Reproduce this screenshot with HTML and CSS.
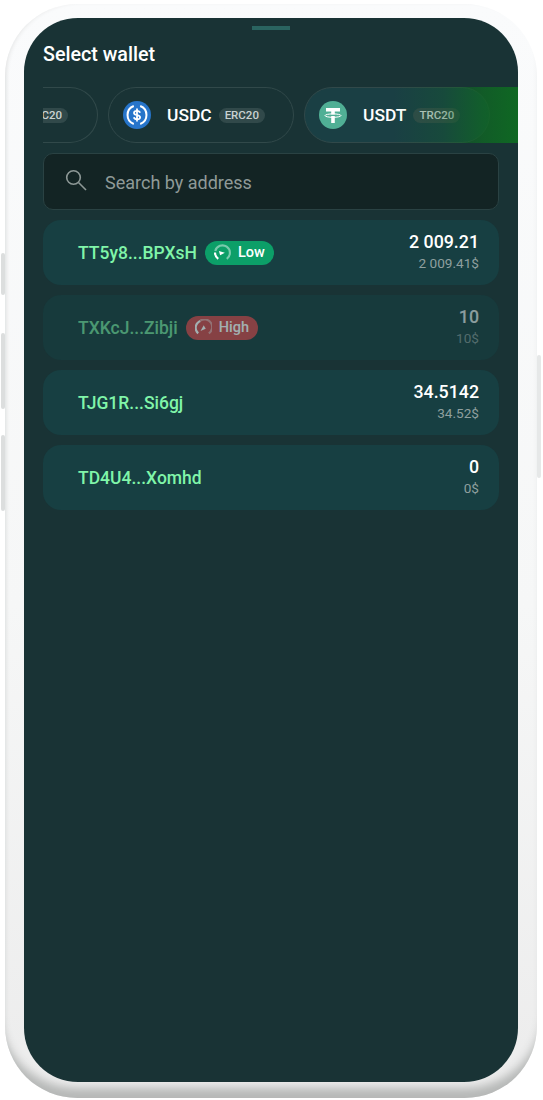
FILE: index.html

```html
<!DOCTYPE html>
<html lang="en">
<head>
    <meta charset="UTF-8">
    <title>Select wallet</title>
    <link rel="stylesheet" href="styles.css">
</head>
<body>
    <div class="phone">
        <span class="sidebtn btn-a"></span>
        <span class="sidebtn btn-b"></span>
        <span class="sidebtn btn-c"></span>
        <span class="sidebtn btn-d"></span>
        <div class="screen">
            <div class="handle"></div>
            <h1>Select wallet</h1>
            <div class="chips">
                <div class="chip chip-cut"><span class="tag">ERC20</span></div>
                <div class="chip">
                    <svg class="coin" viewBox="0 0 28 28">
                        <circle cx="14" cy="14" r="14" fill="#2775ca"/>
                        <path d="M10.8 5a9.6 9.6 0 0 0 0 18M17.2 5a9.6 9.6 0 0 1 0 18" fill="none" stroke="#fff" stroke-width="2"/>
                        <path d="M17 11.8c-.3-1.3-1.5-2-3-2-1.7 0-3 .8-3 2.1 0 3 6.1 1.4 6.1 4.3 0 1.3-1.4 2.1-3.1 2.1-1.6 0-2.8-.7-3.1-2M14 7.6v12.8" fill="none" stroke="#fff" stroke-width="1.8"/>
                    </svg>
                    <span class="coin-name">USDC</span>
                    <span class="tag">ERC20</span>
                </div>
                <div class="chip chip-on">
                    <svg class="coin" viewBox="0 0 28 28">
                        <circle cx="14" cy="14" r="14" fill="#50af95"/>
                        <path d="M7 7h14v3.4h-5.2v3.2h-3.6v-3.2H7zM12.2 15h3.6v7h-3.6z" fill="#fff"/>
                        <ellipse cx="14" cy="14.6" rx="8" ry="1.7" fill="none" stroke="#fff" stroke-width="1"/>
                    </svg>
                    <span class="coin-name">USDT</span>
                    <span class="tag">TRC20</span>
                </div>
                <div class="chips-fade"></div>
            </div>
            <div class="search">
                <svg class="search-icon" viewBox="0 0 22 22">
                    <circle cx="8.5" cy="8.5" r="6.8" fill="none" stroke="#8d9896" stroke-width="1.6"/>
                    <path d="M13.5 13.5l7.5 7.5" stroke="#8d9896" stroke-width="1.6"/>
                </svg>
                <span>Search by address</span>
            </div>
            <div class="wallets">
                <div class="wallet">
                    <div class="addr">TT5y8...BPXsH</div>
                    <div class="risk risk-low">
                        <svg class="gauge" viewBox="0 0 16 16">
                            <path d="M4 14A7 7 0 0 1 1 8" fill="none" stroke="#fff" stroke-width="2"/>
                            <path d="M1.2 6.5A7 7 0 1 1 12 14" fill="none" stroke="#fff" stroke-opacity=".45" stroke-width="2"/>
                            <path d="M4.6 6.6l5.6 1.6-4.4 2.4z" fill="#fff"/>
                        </svg>
                        Low
                    </div>
                    <div class="amount">
                        <div class="coins">2 009.21</div>
                        <div class="usd">2 009.41$</div>
                    </div>
                </div>
                <div class="wallet wallet-dim">
                    <div class="addr">TXKcJ...Zibji</div>
                    <div class="risk risk-high">
                        <svg class="gauge" viewBox="0 0 16 16">
                            <path d="M3 13.5A7 7 0 0 1 5 1.8" fill="none" stroke="#fff" stroke-width="2"/>
                            <path d="M5 1.6A7 7 0 0 1 13 13.5" fill="none" stroke="#fff" stroke-opacity=".45" stroke-width="2"/>
                            <path d="M5.2 11.4l3-5.6 1.9 3.3z" fill="#fff"/>
                        </svg>
                        High
                    </div>
                    <div class="amount">
                        <div class="coins">10</div>
                        <div class="usd">10$</div>
                    </div>
                </div>
                <div class="wallet">
                    <div class="addr">TJG1R...Si6gj</div>
                    <div class="amount">
                        <div class="coins">34.5142</div>
                        <div class="usd">34.52$</div>
                    </div>
                </div>
                <div class="wallet">
                    <div class="addr">TD4U4...Xomhd</div>
                    <div class="amount">
                        <div class="coins">0</div>
                        <div class="usd">0$</div>
                    </div>
                </div>
            </div>
        </div>
    </div>
</body>
</html>
```

FILE: styles.css

```css
body {
    margin: 0;
    background-color: #ffffff;
    font-family: Roboto, "Liberation Sans", sans-serif;
    overflow: hidden;
}
.phone {
    position: relative;
    width: 532px;
    height: 1094px;
    margin: 4px 0 0 5px;
    padding: 14px 19px 16px 19px;
    box-sizing: border-box;
    border-radius: 72px;
    background: linear-gradient(180deg, #fafbfc 0%, #f6f7f7 55%, #ececec 100%);
    box-shadow: inset 0 -16px 10px -6px #b6b8b7, inset 3px 0 4px -2px #e3e4e4;
}
.sidebtn {
    position: absolute;
    width: 4px;
    background-color: #dcdede;
    border-radius: 2px;
}
.btn-a { left: -4px; top: 249px; height: 42px; }
.btn-b { left: -4px; top: 329px; height: 76px; }
.btn-c { left: -4px; top: 431px; height: 76px; }
.btn-d { right: -4px; top: 351px; height: 123px; background-color: #e6e8e8; }
.screen {
    position: relative;
    height: 100%;
    padding: 0 19px;
    box-sizing: border-box;
    background-color: #193335;
    border-radius: 54px;
    overflow: hidden;
}
.handle {
    position: absolute;
    top: 8px;
    left: 228px;
    width: 38px;
    height: 4px;
    background-color: #2a6460;
}
h1 {
    margin: 0;
    padding-top: 26px;
    height: 43px;
    color: #ffffff;
    font-size: 19.7px;
    line-height: 22px;
    font-weight: 500;
}
.chips {
    position: relative;
    display: flex;
    gap: 10px;
    margin-right: -19px;
    height: 56px;
    overflow: hidden;
}
.chip {
    flex: none;
    display: flex;
    align-items: center;
    width: 186px;
    height: 56px;
    padding-left: 14px;
    box-sizing: border-box;
    border: 1px solid #31494a;
    border-radius: 28px;
}
.chip-cut {
    width: 55px;
    padding-left: 0;
    border-left: 0;
    border-radius: 0 28px 28px 0;
    overflow: hidden;
    justify-content: flex-end;
    padding-right: 29px;
}
.chip-cut .tag {
    margin-left: 0;
    flex: none;
}
.chip-on {
    background-color: #1a3f44;
}
.chips-fade {
    position: absolute;
    right: 0;
    top: 0;
    width: 125px;
    height: 56px;
    background: linear-gradient(90deg, rgba(15, 105, 35, 0) 0%, rgba(15, 105, 35, 0.25) 40%, rgba(15, 105, 35, 0.75) 72%, #0f6823 100%);
}
.coin {
    width: 28px;
    height: 28px;
    flex: none;
}
.coin-name {
    margin-left: 16px;
    color: #ffffff;
    font-size: 17.4px;
    font-weight: 500;
}
.tag {
    margin-left: 7px;
    padding: 0 6px;
    height: 15px;
    line-height: 15px;
    border-radius: 8px;
    background-color: #31494a;
    color: #c9d2d1;
    font-size: 11.5px;
    font-weight: 500;
}
.search {
    display: flex;
    align-items: center;
    height: 57px;
    margin-top: 10px;
    padding-left: 21px;
    box-sizing: border-box;
    background-color: #132424;
    border: 1px solid #2a4243;
    border-radius: 10px;
    color: #8f9a98;
    font-size: 18px;
}
.search span {
    margin-top: 2px;
}
.search-icon {
    width: 22px;
    height: 22px;
    margin-right: 18px;
    margin-top: -4px;
}
.wallets {
    display: flex;
    flex-direction: column;
    gap: 10px;
    margin-top: 10px;
}
.wallet {
    display: flex;
    align-items: center;
    height: 65px;
    padding: 0 20px 0 35px;
    box-sizing: border-box;
    background-color: #173f42;
    border-radius: 18px;
}
.wallet-dim {
    background-color: #173a3c;
}
.wallet-dim > * {
    opacity: 0.5;
}
.addr {
    color: #80f5a9;
    font-size: 17.5px;
    font-weight: 500;
}
.risk {
    display: flex;
    align-items: center;
    height: 24px;
    margin-left: 8px;
    padding: 0 9px;
    border-radius: 12px;
    color: #ffffff;
    font-size: 14.5px;
    font-weight: 500;
}
.risk-low { background-color: #0c9f68; }
.risk-high { background-color: #d0464a; opacity: 0.6; }
.gauge {
    width: 17px;
    height: 17px;
    margin-right: 7px;
}
.amount {
    margin-left: auto;
    padding-bottom: 2px;
    text-align: right;
}
.coins {
    color: #ffffff;
    font-size: 17.8px;
    line-height: 22px;
    font-weight: 500;
}
.usd {
    margin-top: 2px;
    color: #8f9f9f;
    font-size: 13.6px;
    line-height: 17px;
}
```
